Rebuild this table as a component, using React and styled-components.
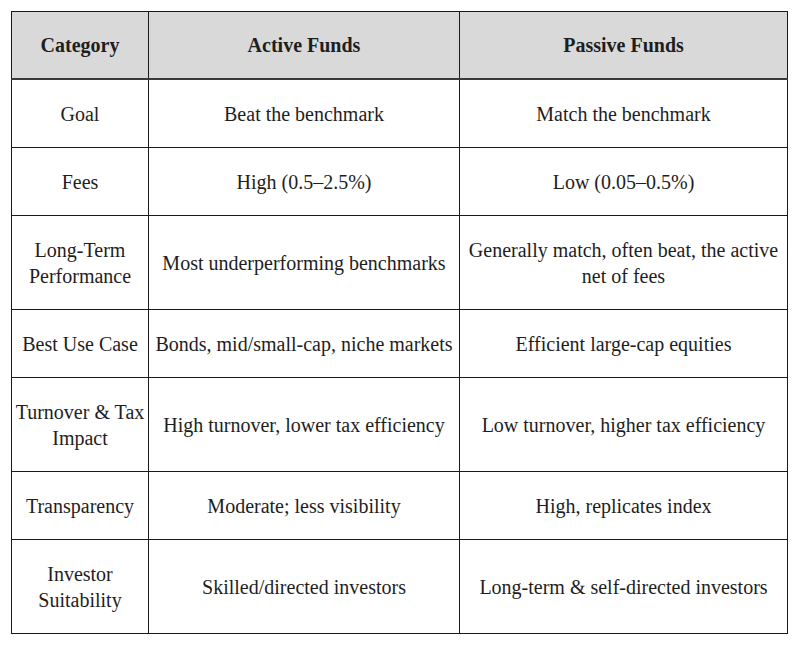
import React from 'react';
import styled, { createGlobalStyle } from 'styled-components';

const GlobalStyle = createGlobalStyle`
  body {
    margin: 0;
    background: #ffffff;
  }
`;

const Page = styled.div`
  padding: 11px 13px 11px 11px;
  font-family: "Liberation Serif", "Times New Roman", serif;
  color: #1e1e1e;
`;

const Table = styled.table`
  width: 776px;
  border-collapse: collapse;
  table-layout: fixed;
  border: 1px solid #1a1a1a;
  font-size: 20px;
  line-height: 26px;
`;

const HeadCell = styled.th`
  height: 66px;
  padding: 0 2px;
  background: #d9d9d9;
  border: 1px solid #1a1a1a;
  border-bottom: 2px solid #3a3a3a;
  font-weight: bold;
  text-align: center;
  vertical-align: middle;
`;

const Cell = styled.td`
  height: ${(p) => (p.$tall ? 93 : 67)}px;
  padding: 0 2px;
  border: 1px solid #1a1a1a;
  text-align: center;
  vertical-align: middle;
`;

const rows = [
  ['Goal', 'Beat the benchmark', 'Match the benchmark'],
  ['Fees', 'High (0.5–2.5%)', 'Low (0.05–0.5%)'],
  ['Long-Term Performance', 'Most underperforming benchmarks', 'Generally match, often beat, the active net of fees', true],
  ['Best Use Case', 'Bonds, mid/small-cap, niche markets', 'Efficient large-cap equities'],
  ['Turnover & Tax Impact', 'High turnover, lower tax efficiency', 'Low turnover, higher tax efficiency', true],
  ['Transparency', 'Moderate; less visibility', 'High, replicates index'],
  ['Investor Suitability', 'Skilled/directed investors', 'Long-term & self-directed investors', true],
];

export default function App() {
  return (
    <Page>
      <GlobalStyle />
      <Table>
        <colgroup>
          <col style={{ width: 137 }} />
          <col style={{ width: 311 }} />
          <col style={{ width: 328 }} />
        </colgroup>
        <thead>
          <tr>
            <HeadCell>Category</HeadCell>
            <HeadCell>Active Funds</HeadCell>
            <HeadCell>Passive Funds</HeadCell>
          </tr>
        </thead>
        <tbody>
          {rows.map(([cat, active, passive, tall]) => (
            <tr key={cat}>
              <Cell $tall={tall}>{cat}</Cell>
              <Cell $tall={tall}>{active}</Cell>
              <Cell $tall={tall}>{passive}</Cell>
            </tr>
          ))}
        </tbody>
      </Table>
    </Page>
  );
}
